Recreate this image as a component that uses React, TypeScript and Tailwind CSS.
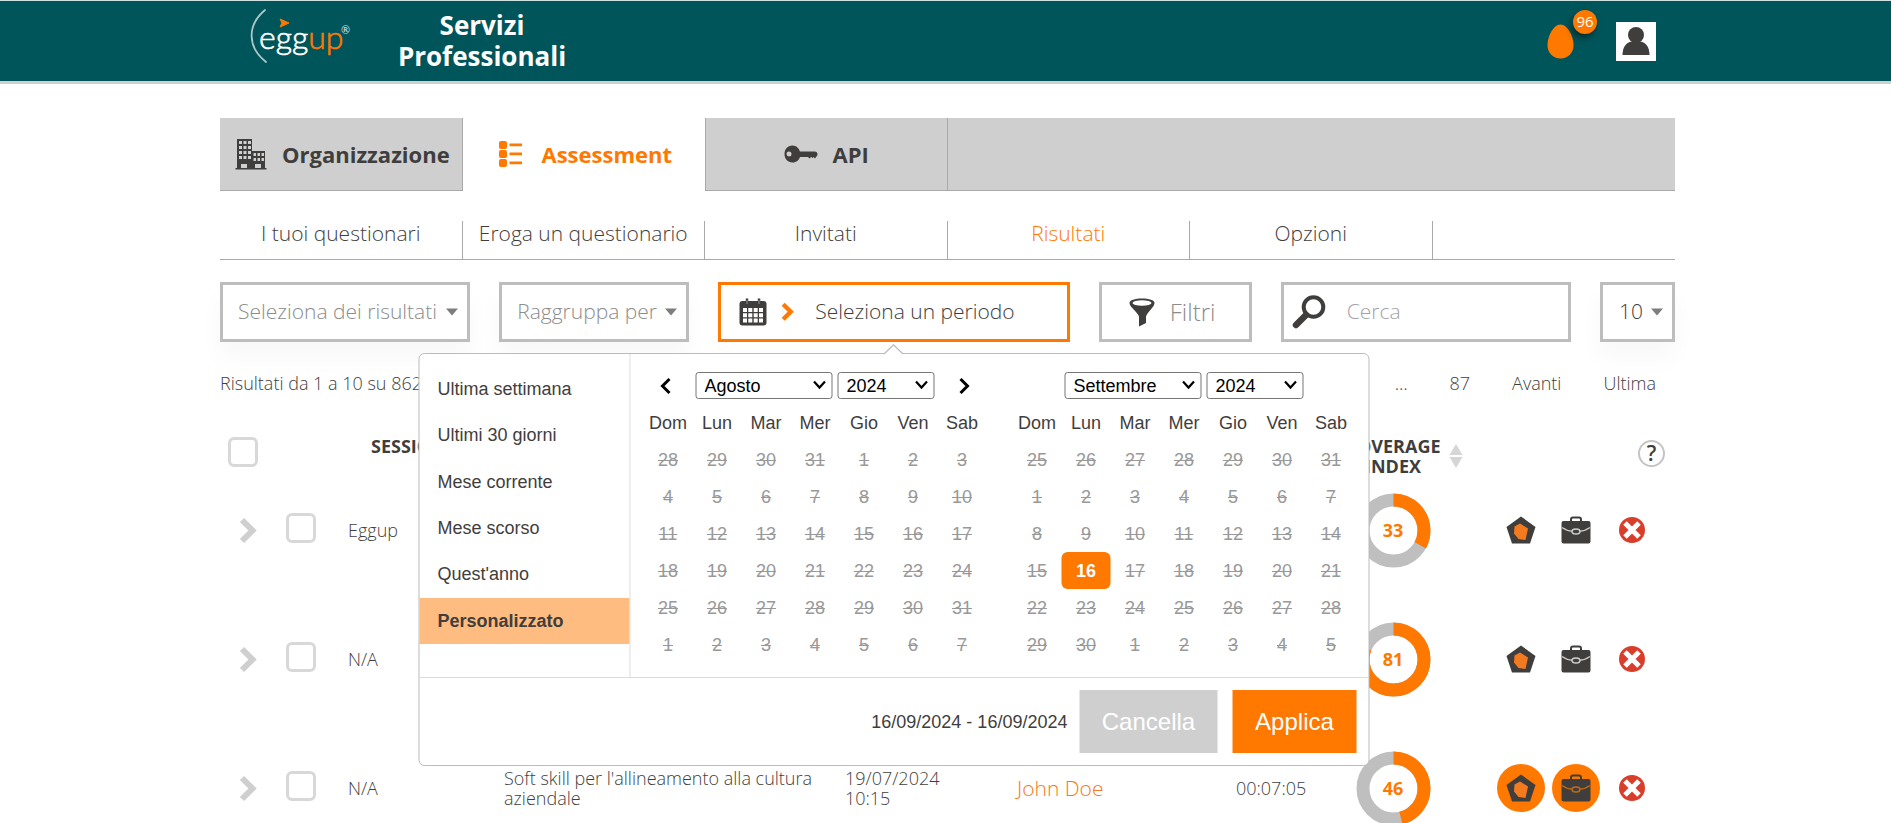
import React from "react";

const ink = "#3f3e3d";

function Logo() {
  return (
    <svg width="104" height="60" viewBox="0 0 104 60" role="img" aria-label="eggup">
      <path d="M16 3C-2 18-2 40 17 55" fill="none" stroke="#a9c6c8" strokeWidth="1.8" strokeLinecap="round" />
      <path d="M31 12l9 4-9 4 2-4z" fill="#ff7800" stroke="#ff7800" />
      <text x="10" y="42" fontFamily="Lato, sans-serif" fontSize="32" fontWeight="300" fill="#fff" stroke="#fff" strokeWidth=".6">
        egg<tspan fill="#ff7800" stroke="#ff7800">up</tspan>
      </text>
      <text x="92" y="27" fontFamily="Lato, sans-serif" fontSize="11" fontWeight="700" fill="#a9c6c8">®</text>
    </svg>
  );
}

function Buildings() {
  return (
    <svg width="32" height="32" viewBox="0 0 32 32" fill={ink} aria-hidden="true">
      <path fillRule="evenodd" d="M2 1h15v12h13v17h1.500v1.500H.5V30H2zM4 3v3h3V3zm4.500 0v3h3V3zM13 3v3h3V3zM4 8v3h3V8zm4.500 0v3h3V8zM13 8v3h3V8zM4 13v3h3v-3zm4.500 0v3h3v-3zM13 13v3h3v-3zM4 18v3h3v-3zm4.500 0v3h3v-3zM13 18v3h3v-3zM6 26v4h6v-4zM18.500 15v3h2.500v-3zm4 0v3H25v-3zm4 0v3H29v-3zm-8 5v3h2.500v-3zm4 0v3H25v-3zm4 0v3H29v-3zM20 26v4h6v-4z" />
    </svg>
  );
}

function ListIcon() {
  return (
    <svg width="24" height="28" viewBox="0 0 24 28" fill="#ff7800" aria-hidden="true">
      <rect x="0" y="1" width="8" height="8" rx="2" />
      <rect x="0" y="10" width="8" height="8" rx="2" />
      <rect x="0" y="19" width="8" height="8" rx="2" />
      <path d="M10.500 3.500H23v2.800H10.500zM10.500 12.500H23v2.800H10.500zM10.500 21.500H23v2.800H10.500z" />
    </svg>
  );
}

function KeyIcon() {
  return (
    <svg width="34" height="18" viewBox="0 0 34 18" fill={ink} aria-hidden="true">
      <path fillRule="evenodd" d="M8.500.5C3.500.5.5 4.500.5 9s3 8.500 8 8.500c4 0 6.500-2.500 7.500-5.500h8l1.500 1.500L27 12l1.500 1 1-1 1.500 1.500L33.500 10c0-3-1-3.500-3-3.500H16C15 3.500 12.500.5 8.500.5zM5 6.500a2.500 2.500 0 110 5 2.500 2.500 0 010-5z" />
    </svg>
  );
}

function CalendarIcon() {
  return (
    <svg width="28" height="28" viewBox="0 0 28 28" aria-hidden="true">
      <path d="M8 .5v5M20 .5v5" stroke={ink} strokeWidth="2.500" />
      <rect x=".5" y="3" width="27" height="24.500" rx="3" fill={ink} />
      <path
        d="M4 10h4v4H4zM9.300 10h4v4h-4zM14.700 10h4v4h-4zM20 10h4v4h-4zM4 15.300h4v4H4zM9.300 15.300h4v4h-4zM14.700 15.300h4v4h-4zM20 15.300h4v4h-4zM4 20.600h4v4H4zM9.300 20.600h4v4h-4zM14.700 20.600h4v4h-4zM20 20.600h4v4h-4z"
        fill="#fff"
      />
      <path d="M8 2v4M20 2v4" stroke="#aaa" strokeWidth=".8" />
    </svg>
  );
}

function FunnelIcon() {
  return (
    <svg width="26" height="29" viewBox="0 0 26 29" aria-hidden="true">
      <path d="M.5 5C.5 2 6 .5 13 .5S25.500 2 25.500 5c0 4-7 9-8.500 13.500V25L10 28.500v-10C8.500 14 .5 9 .5 5z" fill={ink} />
      <ellipse cx="13" cy="5" rx="9.500" ry="2.800" fill="#fff" />
    </svg>
  );
}

function SearchIcon() {
  return (
    <svg width="34" height="34" viewBox="0 0 34 34" fill="none" stroke={ink} aria-hidden="true">
      <circle cx="21.500" cy="12" r="9.800" strokeWidth="4" />
      <path d="M14 20L4 30" strokeWidth="6.500" strokeLinecap="round" />
    </svg>
  );
}

function Chevron({ className, size, stroke, flip }: { className: string; size: number; stroke: number; flip?: boolean }) {
  return (
    <svg className={className} width={size} height={(size * 3) / 2} viewBox="0 0 12 18" fill="none" stroke="currentColor" strokeWidth={stroke} aria-hidden="true">
      <path d={flip ? "M10 2L3 9l7 7" : "M2 2l7 7-7 7"} />
    </svg>
  );
}

function Pentagon() {
  return (
    <svg width="30" height="28" viewBox="0 0 30 28" aria-hidden="true">
      <path d="M15 .5L29.500 11 24 27.500H6L.5 11z" fill={ink} />
      <path d="M14 7.500l8 5-2.500 11.500-7-1-4.500-5.500.500-7z" fill="#f47a20" />
    </svg>
  );
}

function Briefcase({ line }: { line: string }) {
  return (
    <svg width="30" height="28" viewBox="0 0 30 28" aria-hidden="true">
      <path d="M10 6V3.500Q10 1.500 12 1.500h6q2 0 2 2V6" fill="none" stroke={ink} strokeWidth="2" />
      <rect x=".5" y="5" width="29" height="22.500" rx="2" fill={ink} />
      <path d="M1 11.500c4 3 7 3.500 10.500 3.700M29 11.500c-4 3-7 3.500-10.500 3.700" fill="none" stroke={line} strokeWidth="1.200" />
      <ellipse cx="15" cy="15.500" rx="4" ry="2.500" fill="none" stroke={line} strokeWidth="1.400" />
    </svg>
  );
}

function DeleteIcon() {
  return (
    <svg width="26" height="26" viewBox="0 0 26 26" aria-hidden="true">
      <circle cx="13" cy="13" r="13" fill="#d93e2b" />
      <path d="M6 6l14 14M20 6L6 20" stroke="#fff" strokeWidth="5" />
    </svg>
  );
}

function Donut({ value }: { value: number }) {
  const r = 30.5;
  const c = 2 * Math.PI * r;
  return (
    <div className="relative mx-auto grid size-[75px] place-items-center">
      <svg className="absolute inset-0" width="75" height="75" viewBox="0 0 75 75" fill="none" strokeWidth="13" aria-hidden="true">
        <circle cx="37.5" cy="37.5" r={r} stroke="#bfbfbf" />
        <circle cx="37.5" cy="37.5" r={r} stroke="#ff7800" strokeDasharray={`${(c * value) / 100} ${c}`} transform="rotate(-90 37.5 37.5)" />
      </svg>
      <span className="relative font-bold text-[#ff7800]">{value}</span>
    </div>
  );
}

function Check({ label }: { label: string }) {
  return (
    <input
      type="checkbox"
      aria-label={label}
      className="block size-[30px] appearance-none rounded-md border-3 border-[#d8d8d8] bg-white checked:bg-[#ff7800]"
    />
  );
}

const months = ["Gennaio", "Febbraio", "Marzo", "Aprile", "Maggio", "Giugno", "Luglio", "Agosto", "Settembre", "Ottobre", "Novembre", "Dicembre"];
const weekdays = ["Dom", "Lun", "Mar", "Mer", "Gio", "Ven", "Sab"];

function PickerSelect({ label, value, options, wide }: { label: string; value: string; options: string[]; wide?: boolean }) {
  return (
    <span className={wide ? "relative w-[137px]" : "relative w-[97px]"}>
      <select
        aria-label={label}
        defaultValue={value}
        className="h-[27px] w-full appearance-none rounded-[3px] border border-[#767676] bg-white pl-2 text-black"
      >
        {options.map((o) => (
          <option key={o}>{o}</option>
        ))}
      </select>
      <svg className="pointer-events-none absolute top-2 right-1.5" width="14" height="10" viewBox="0 0 14 10" fill="none" stroke="#000" strokeWidth="2.200" aria-hidden="true">
        <path d="M1.500 1.500L7 7.500l5.500-6" />
      </svg>
    </span>
  );
}

function Month({ month, first, before, length, prev, next, selected }: { month: string; first: number; before: number; length: number; prev?: boolean; next?: boolean; selected?: number }) {
  const cells = Array.from({ length: 42 }, (_, i) => {
    if (i < first) return { day: before - first + 1 + i, own: false };
    const d = i - first + 1;
    return d <= length ? { day: d, own: true } : { day: d - length, own: false };
  });
  return (
    <table className="w-[343px] table-fixed border-collapse text-center">
      <thead>
        <tr className="h-[37px]">
          <th className="p-0">
            {prev && (
              <button aria-label="Mese precedente" className="block px-4 text-black">
                <Chevron className="" size={12} stroke={3} flip />
              </button>
            )}
          </th>
          <th colSpan={5} className="p-0 font-normal">
            <div className="flex justify-center gap-[5px]">
              <PickerSelect label="Mese" value={month} options={months} wide />
              <PickerSelect label="Anno" value="2024" options={["2023", "2024", "2025"]} />
            </div>
          </th>
          <th className="p-0">
            {next && (
              <button aria-label="Mese successivo" className="ml-auto block px-4 text-black">
                <Chevron className="" size={12} stroke={3} />
              </button>
            )}
          </th>
        </tr>
        <tr className="h-[37px]">
          {weekdays.map((d) => (
            <th key={d} className="p-0 font-normal">{d}</th>
          ))}
        </tr>
      </thead>
      <tbody>
        {[0, 1, 2, 3, 4, 5].map((w) => (
          <tr key={w} className="h-[37px]">
            {cells.slice(w * 7, w * 7 + 7).map((c, i) =>
              c.own && c.day === selected ? (
                <td key={i} className="rounded-md bg-[#ff7800] p-0 font-bold text-white">{c.day}</td>
              ) : (
                <td key={i} className="p-0 text-[#999] line-through">{c.day}</td>
              ),
            )}
          </tr>
        ))}
      </tbody>
    </table>
  );
}

const ranges = ["Ultima settimana", "Ultimi 30 giorni", "Mese corrente", "Mese scorso", "Quest'anno", "Personalizzato"];

function PeriodPicker() {
  return (
    <div className="absolute top-[68px] left-1/2 z-10 w-[951px] -translate-x-1/2 rounded-md border border-[#bbb] bg-white font-['Liberation_Sans',Arial,sans-serif] text-[18px] leading-6 font-normal text-[#3f3e3d]">
      <svg className="absolute -top-[10px] left-1/2 -ml-[10px]" width="20" height="11" viewBox="0 0 20 11" aria-hidden="true">
        <path d="M0 10.500L10 .8l10 9.700z" fill="#fff" />
        <path d="M.5 10L10 .8l9.500 9.200" fill="none" stroke="#bbb" strokeWidth="1.200" />
      </svg>
      <div className="flex border-b border-[#ddd]">
        <ul className="grid h-[290px] w-[210px] grid-rows-6 pt-3">
          {ranges.map((r) => (
            <li key={r} className="flex">
              <button className={r === "Personalizzato" ? "w-full bg-[#ffbc80] px-[18px] text-left font-bold" : "w-full px-[18px] text-left"}>{r}</button>
            </li>
          ))}
        </ul>
        <div className="flex flex-1 justify-between border-l border-[#ddd] pt-[13px] pr-[13px] pb-[14px] pl-[13px]">
          <Month month="Agosto" first={4} before={31} length={31} prev next />
          <Month month="Settembre" first={7} before={31} length={30} selected={16} />
        </div>
      </div>
      <div className="flex items-center justify-end py-3 pr-3">
        <span className="mr-3">16/09/2024 - 16/09/2024</span>
        <button className="mr-[15px] h-[63px] w-[138px] bg-[#cfcfcf] text-2xl text-white">Cancella</button>
        <button className="h-[63px] w-[124px] bg-[#ff7800] text-2xl text-white">Applica</button>
      </div>
    </div>
  );
}

function Caret() {
  return (
    <svg className="shrink-0" width="12" height="8" viewBox="0 0 12 8" fill="#7d7d7d" aria-hidden="true">
      <path d="M0 .5h12L6 7.500z" />
    </svg>
  );
}

const rows = [
  { org: "Eggup", test: "", date: "", name: "", time: "", score: 33, on: false },
  { org: "N/A", test: "", date: "", name: "", time: "", score: 81, on: false },
  { org: "N/A", test: "Soft skill per l'allineamento alla cultura aziendale", date: "19/07/2024 10:15", name: "John Doe", time: "00:07:05", score: 46, on: true },
];

const subnav = ["I tuoi questionari", "Eroga un questionario", "Invitati", "Risultati", "Opzioni"];

export default function App() {
  return (
    <div className="h-screen overflow-hidden bg-white font-['Open_Sans','Noto_Sans',sans-serif] font-light text-[#3f3e3d]">
      <header className="flex h-[84px] items-center border-t border-b-3 border-t-[#cfe0e0] border-b-[#cfcfcf] bg-[#00555a] pr-[235px] pl-[249px]">
        <a href="#home" className="pb-2"><Logo /></a>
        <h1 className="ml-[34px] w-[190px] text-center text-[26px] leading-[31px] font-bold text-white">Servizi Professionali</h1>
        <div className="ml-auto flex items-center">
          <button aria-label="Notifiche" className="relative mr-[42px]">
            <svg className="block" width="27" height="35" viewBox="0 0 27 35" aria-hidden="true">
              <path d="M13.500.5C6 .5.5 13 .5 21c0 8 5.500 13.500 13 13.500S26.500 29 26.500 21C26.500 13 21 .5 13.500.5z" fill="#ff7800" />
            </svg>
            <span className="absolute -top-[14px] left-[26px] grid size-6 place-items-center rounded-full bg-[#ff7800] text-[15px] leading-none font-normal text-white shadow-[-2px_4px_6px_rgba(0,0,0,0.45)]">96</span>
          </button>
          <button aria-label="Profilo" className="grid h-[39px] w-10 place-items-center bg-white">
            <svg width="28" height="28" viewBox="0 0 28 28" fill={ink} aria-hidden="true">
              <circle cx="14" cy="8" r="8" />
              <path d="M.5 28c0-8 4-13 9-13.500h9c5 .5 9 5.500 9 13.500z" />
            </svg>
          </button>
        </div>
      </header>

      <main className="pt-[34px] pr-[216px] pl-[220px]">
        <nav className="grid grid-cols-6 text-[22px] font-bold">
          <a href="#org" className="flex h-[73px] items-center border-r border-b border-[#a9a9a9] bg-[#cfcfcf] pl-[15px]">
            <Buildings />
            <span className="ml-[15px]">Organizzazione</span>
          </a>
          <a href="#assessment" className="flex h-[73px] items-center justify-center gap-[18px] pb-px pl-1 text-[#ff7800]">
            <ListIcon />
            Assessment
          </a>
          <a href="#api" className="flex h-[73px] items-center justify-center gap-[15px] border-x border-b border-[#a9a9a9] bg-[#cfcfcf]">
            <KeyIcon />
            API
          </a>
          <div className="col-span-3 border-b border-[#a9a9a9] bg-[#cfcfcf]" />
        </nav>

        <nav className="mt-[30px] grid grid-cols-6 border-b border-[#a9a9a9] text-[21px] leading-6">
          {subnav.map((s) => (
            <a key={s} href="#sub" className={s === "Risultati" ? "h-[38px] border-r border-[#a9a9a9] text-center text-[#ff7800]" : "h-[38px] border-r border-[#a9a9a9] text-center"}>
              {s}
            </a>
          ))}
        </nav>

        <div className="mt-[22px] grid h-[60px] grid-cols-[250fr_190fr_351fr_153fr_290fr_75fr] gap-[29px] text-[21px] whitespace-nowrap">
          <button className="flex items-center justify-between border-3 border-[#bdbdbd] bg-white pr-[9px] pl-[15px] text-[#8c8c8c] shadow-[0_16px_24px_rgba(0,0,0,0.03)]">
            Seleziona dei risultati <Caret />
          </button>
          <button className="flex items-center justify-between border-3 border-[#bdbdbd] bg-white pr-[9px] pl-[15px] text-[#8c8c8c] shadow-[0_16px_24px_rgba(0,0,0,0.03)]">
            Raggruppa per <Caret />
          </button>
          <div className="relative border-3 border-[#ff7800] bg-white">
            <button className="flex h-full w-full items-center pl-[18px]">
              <CalendarIcon />
              <Chevron className="ml-[14px] text-[#ff7800]" size={13} stroke={4} />
              <span className="ml-[21px]">Seleziona un periodo</span>
            </button>
            <PeriodPicker />
          </div>
          <button className="flex items-center justify-center gap-[15px] border-3 border-[#bdbdbd] bg-white pr-1.5 text-2xl text-[#8c8c8c]">
            <FunnelIcon />
            Filtri
          </button>
          <label className="flex items-center border-3 border-[#bdbdbd] bg-white pl-2">
            <SearchIcon />
            <input type="search" aria-label="Cerca" placeholder="Cerca" className="ml-[21px] w-full min-w-0 flex-1 outline-none placeholder:text-[#a3a3a3]" />
          </label>
          <button className="flex items-center justify-between border-3 border-[#bdbdbd] bg-white pr-[9px] pl-4 shadow-[0_16px_24px_rgba(0,0,0,0.03)]">
            10 <Caret />
          </button>
        </div>

        <div className="flex h-[82px] items-center justify-between text-[18px]">
          <span>Risultati da 1 a 10 su 862</span>
          <nav className="flex pr-[19px]">
            <span className="mr-[42px]">…</span>
            <a href="#87" className="mr-[42px]">87</a>
            <a href="#next" className="mr-[42px]">Avanti</a>
            <a href="#last">Ultima</a>
          </nav>
        </div>

        <table className="w-full table-fixed border-collapse text-left text-[18px] leading-5">
          <colgroup>
            <col className="w-[48px]" />
            <col className="w-[66px]" />
            <col className="w-[156px]" />
            <col className="w-[341px]" />
            <col className="w-[172px]" />
            <col className="w-[219px]" />
            <col className="w-[118px]" />
            <col className="w-[106px]" />
            <col className="w-[48px]" />
            <col className="w-[54px]" />
            <col className="w-[56px]" />
            <col className="w-[71px]" />
          </colgroup>
          <thead>
            <tr className="h-[56px] font-bold">
              <th className="p-0 pl-2"><Check label="Seleziona tutti" /></th>
              <th className="p-0" />
              <th className="p-0 pt-3 pl-[37px] align-top">SESSIONE</th>
              <th className="p-0" colSpan={4} />
              <th className="p-0 pt-3 text-center align-top">COVERAGE INDEX</th>
              <th className="p-0 pt-2 pl-[3px]">
                <svg width="14" height="26" viewBox="0 0 14 26" fill="#d6d6d6" aria-hidden="true">
                  <path d="M7 1l6.500 11H.5zM7 25L.5 14h13z" />
                </svg>
              </th>
              <th className="p-0" colSpan={2} />
              <th className="p-0 pt-0.5 pl-[34px]">
                <button aria-label="Aiuto" className="grid size-[27px] place-items-center rounded-full border-2 border-[#c4c4c4] text-[21px] leading-none font-semibold">?</button>
              </th>
            </tr>
          </thead>
          <tbody>
            {rows.map((r, i) => (
              <tr key={i} className="h-[129px]">
                <td className="p-0 pb-[29px] pl-[19px]">
                  <button aria-label="Espandi" className="block text-[#cfcfcf]"><Chevron className="" size={18} stroke={4} /></button>
                </td>
                <td className="p-0 pb-[33px] pl-[18px]"><Check label={`Seleziona riga ${i + 1}`} /></td>
                <td className="p-0 pb-[29px] pl-[14px]">{r.org}</td>
                <td className="px-[14px] pt-0 pb-[29px]">{r.test}</td>
                <td className="p-0 pb-[29px] pl-[14px]"><div className="w-[110px]">{r.date}</div></td>
                <td className="p-0 pb-[29px] pl-[14px] text-[21px]"><a href="#user" className="text-[#f47a20]">{r.name}</a></td>
                <td className="p-0 pb-[29px] pl-[14px]">{r.time}</td>
                <td className="p-0 pb-[29px]"><Donut value={r.score} /></td>
                <td className="p-0" />
                <td className="p-0 pb-[29px]">
                  <button aria-label="Profilo soft skill" className={r.on ? "mx-auto grid size-12 place-items-center rounded-full bg-[#ff7800]" : "mx-auto grid size-12 place-items-center rounded-full"}><Pentagon /></button>
                </td>
                <td className="p-0 pb-[29px]">
                  <button aria-label="Profilo professionale" className={r.on ? "mx-auto grid size-12 place-items-center rounded-full bg-[#ff7800]" : "mx-auto grid size-12 place-items-center rounded-full"}><Briefcase line={r.on ? "#c9690f" : "#cfcfcf"} /></button>
                </td>
                <td className="p-0 pb-[29px] pl-[15px]"><button aria-label="Elimina" className="block"><DeleteIcon /></button></td>
              </tr>
            ))}
          </tbody>
        </table>
      </main>
    </div>
  );
}
